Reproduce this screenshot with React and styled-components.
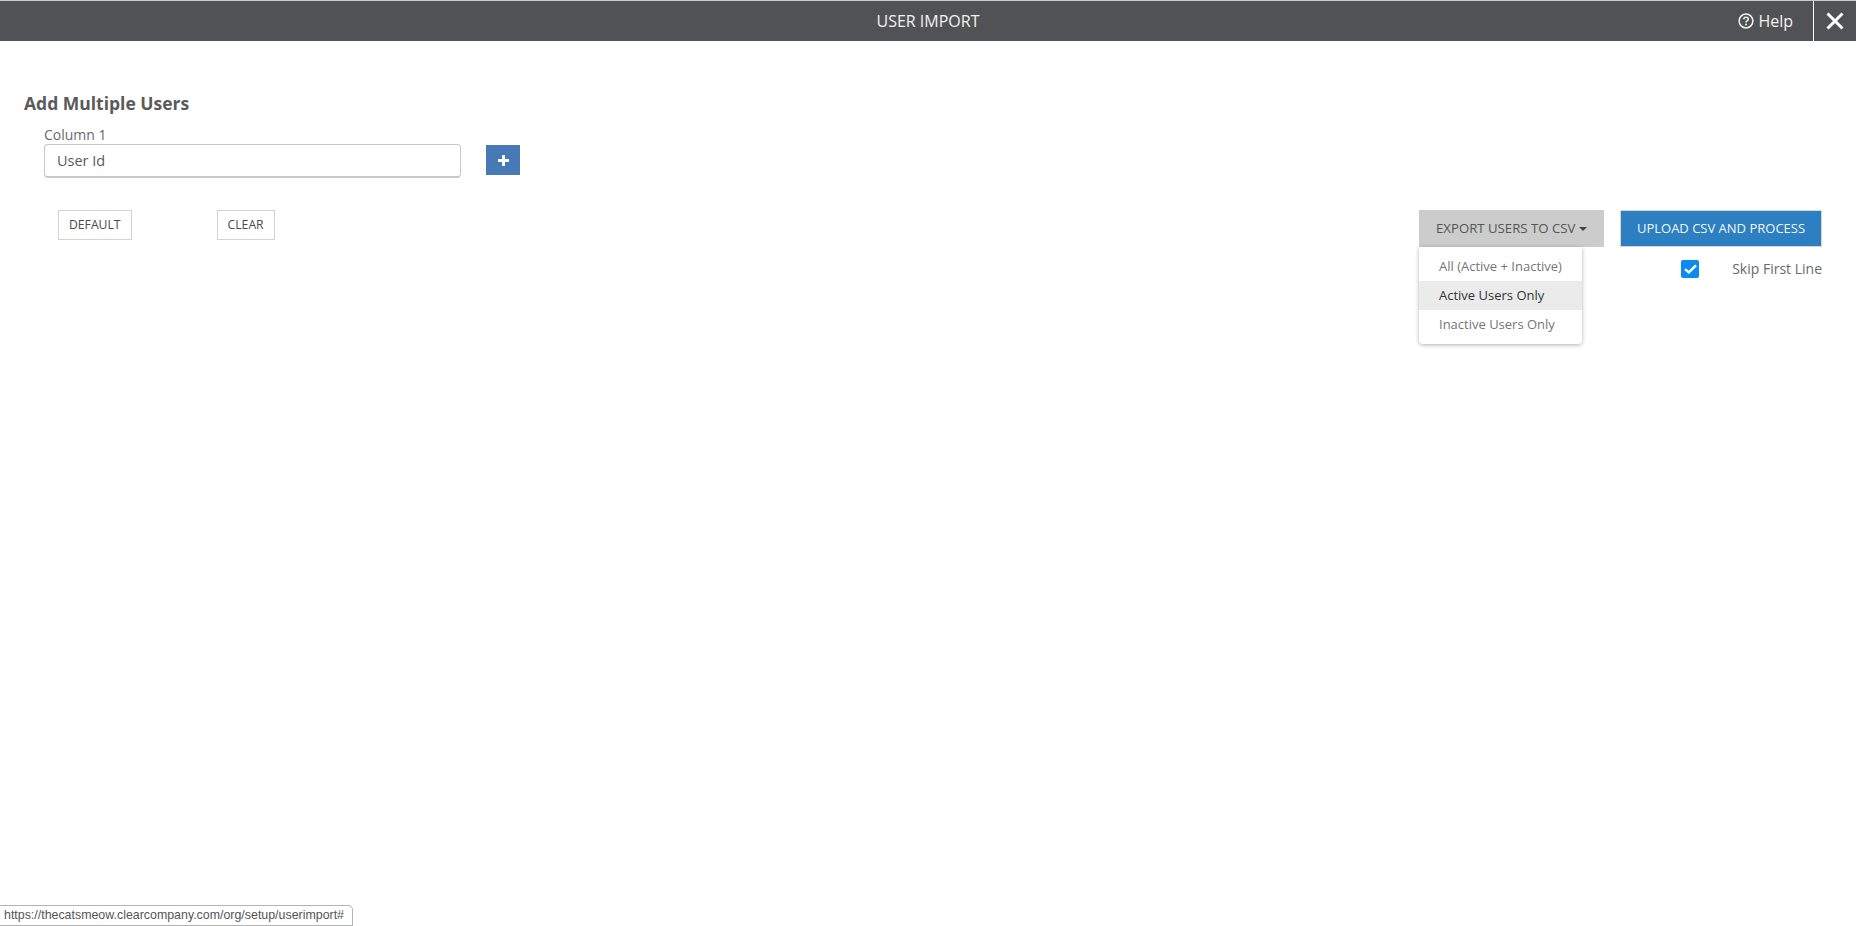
import React from 'react'
import styled, { createGlobalStyle } from 'styled-components'

const GlobalStyle = createGlobalStyle`
  html, body {
    margin: 0;
    padding: 0;
    background: #fff;
    font-family: "Open Sans", "Liberation Sans", sans-serif;
    color: #555;
  }
  * { box-sizing: border-box; }
`

const Page = styled.div`
  position: relative;
  width: 1856px;
  height: 926px;
  overflow: hidden;
`

const Header = styled.header`
  display: grid;
  grid-template-columns: 1fr auto 1fr;
  align-items: center;
  height: 41px;
  background: #515254;
  border-top: 1px solid #c9cacc;
  color: #fff;
`

const Title = styled.div`
  grid-column: 2;
  font-size: 16px;
  color: #f2f2f2;
`

const HeaderActions = styled.div`
  grid-column: 3;
  display: flex;
  justify-content: flex-end;
  align-items: stretch;
  height: 40px;
`

const Help = styled.a`
  display: flex;
  align-items: center;
  gap: 4px;
  padding-right: 20px;
  font-size: 16px;
  color: #f2f2f2;
`

const Close = styled.a`
  display: flex;
  align-items: center;
  justify-content: center;
  width: 43px;
  border-left: 1px solid #fff;
`

const Content = styled.main`
  padding: 51px 34px 0 24px;
`

const Heading = styled.h2`
  margin: 0;
  font-size: 17.5px;
  line-height: 23px;
  font-weight: 700;
  color: #5a5a5a;
`

const ColumnBlock = styled.div`
  margin: 11px 0 0 20px;
`

const Label = styled.label`
  display: block;
  font-size: 14px;
  line-height: 18px;
  color: #6a6a6a;
`

const FieldRow = styled.div`
  display: flex;
  align-items: flex-start;
  gap: 25px;
`

const Input = styled.input`
  width: 417px;
  height: 34px;
  padding: 0 12px;
  border: 1px solid #c8c8c8;
  border-bottom-width: 2px;
  border-radius: 4px;
  font-family: inherit;
  font-size: 14.5px;
  color: #5a5a5a;
`

const AddButton = styled.button`
  display: flex;
  align-items: center;
  justify-content: center;
  width: 34px;
  height: 30px;
  margin-top: 1px;
  padding: 0;
  border: 0;
  background: #4679b5;
`

const Toolbar = styled.div`
  display: flex;
  justify-content: space-between;
  align-items: flex-start;
  margin-top: 32px;
`

const LeftButtons = styled.div`
  display: flex;
  gap: 85px;
  padding-left: 34px;
`

const GhostButton = styled.button`
  height: 30px;
  padding: 0 10px 2px;
  border: 1px solid #d3d3d3;
  background: #fff;
  font-family: inherit;
  font-size: 12.2px;
  color: #4a4a4a;
`

const RightArea = styled.div`
  display: flex;
  gap: 16px;
  align-items: flex-start;
`

const Dropdown = styled.div`
  position: relative;
`

const ExportButton = styled.button`
  display: flex;
  align-items: center;
  gap: 4px;
  height: 37px;
  width: 185px;
  padding: 0 0 2px 17px;
  border: 0;
  background: #cccccc;
  font-family: inherit;
  font-size: 13.2px;
  color: #555;
`

const Caret = styled.span`
  width: 0;
  height: 0;
  margin-top: 2px;
  border-left: 4px solid transparent;
  border-right: 4px solid transparent;
  border-top: 4px solid #444;
`

const Menu = styled.ul`
  position: absolute;
  top: 37px;
  left: 0;
  width: 163px;
  height: 97px;
  margin: 0;
  padding: 5px 0 0;
  list-style: none;
  background: #fff;
  border-radius: 0 0 4px 4px;
  box-shadow: 0 1px 4px rgba(0, 0, 0, 0.3);
`

const MenuItem = styled.li`
  height: 29px;
  padding-left: 20px;
  font-size: 13px;
  line-height: 29px;
  color: ${p => (p.$active ? '#333' : '#757575')};
  background: ${p => (p.$active ? '#ebebeb' : 'transparent')};
`

const UploadColumn = styled.div`
  display: flex;
  flex-direction: column;
  align-items: flex-end;
`

const UploadButton = styled.button`
  width: 202px;
  height: 37px;
  padding: 0 0 2px;
  border: 1px solid #d5d5d5;
  background: #2c7fc1;
  font-family: inherit;
  font-size: 13px;
  color: #f4f4f4;
`

const SkipRow = styled.div`
  display: flex;
  align-items: center;
  gap: 33px;
  margin-top: 13px;
  font-size: 14px;
  line-height: 18px;
  color: #6a6a6a;
`

const Checkbox = styled.span`
  display: flex;
  align-items: center;
  justify-content: center;
  width: 18px;
  height: 18px;
  border-radius: 2px;
  background: #0a8cf0;
`

const StatusBubble = styled.div`
  position: absolute;
  left: 0;
  bottom: 0;
  width: 353px;
  height: 21px;
  padding-left: 4px;
  background: #fff;
  border: 1px solid #b4b4b4;
  border-left: 0;
  border-radius: 0 5px 0 0;
  font-family: "Liberation Sans", Arial, sans-serif;
  font-size: 12.4px;
  line-height: 19px;
  color: #555;
  white-space: nowrap;
`

export default function App() {
  return (
    <Page>
      <GlobalStyle />
      <Header>
        <Title>USER IMPORT</Title>
        <HeaderActions>
          <Help>
            <svg width="16" height="16" viewBox="0 0 16 16" fill="none" stroke="#f2f2f2">
              <circle cx="8" cy="8" r="6.9" strokeWidth="1.5" />
              <path d="M5.8 6.3c0-1.3 1-2.1 2.2-2.1s2.2.8 2.2 2c0 1.7-2.2 1.7-2.2 3.3" strokeWidth="1.6" />
              <circle cx="8" cy="11.6" r="1" fill="#f2f2f2" stroke="none" />
            </svg>
            Help
          </Help>
          <Close>
            <svg width="18" height="18" viewBox="0 0 18 18" stroke="#fff" strokeWidth="3">
              <path d="M1.5 1.5l15 15M16.5 1.5l-15 15" />
            </svg>
          </Close>
        </HeaderActions>
      </Header>
      <Content>
        <Heading>Add Multiple Users</Heading>
        <ColumnBlock>
          <Label>Column 1</Label>
          <FieldRow>
            <Input defaultValue="User Id" />
            <AddButton>
              <svg width="11" height="11" viewBox="0 0 11 11" fill="#fff">
                <path d="M4 0h3v4h4v3H7v4H4V7H0V4h4z" />
              </svg>
            </AddButton>
          </FieldRow>
        </ColumnBlock>
        <Toolbar>
          <LeftButtons>
            <GhostButton>DEFAULT</GhostButton>
            <GhostButton>CLEAR</GhostButton>
          </LeftButtons>
          <RightArea>
            <Dropdown>
              <ExportButton>
                EXPORT USERS TO CSV
                <Caret />
              </ExportButton>
              <Menu>
                <MenuItem>All (Active + Inactive)</MenuItem>
                <MenuItem $active>Active Users Only</MenuItem>
                <MenuItem>Inactive Users Only</MenuItem>
              </Menu>
            </Dropdown>
            <UploadColumn>
              <UploadButton>UPLOAD CSV AND PROCESS</UploadButton>
              <SkipRow>
                <Checkbox>
                  <svg width="13" height="10" viewBox="0 0 13 10" fill="none" stroke="#fff" strokeWidth="2.4">
                    <path d="M1 5.2l3.8 3.2L12 1.4" />
                  </svg>
                </Checkbox>
                Skip First Line
              </SkipRow>
            </UploadColumn>
          </RightArea>
        </Toolbar>
      </Content>
      <StatusBubble>https://thecatsmeow.clearcompany.com/org/setup/userimport#</StatusBubble>
    </Page>
  )
}
